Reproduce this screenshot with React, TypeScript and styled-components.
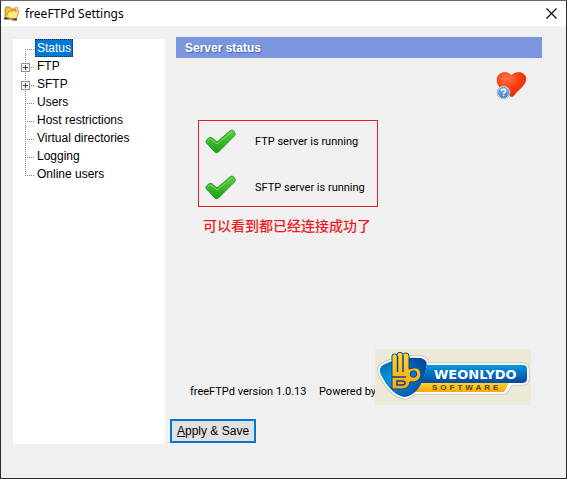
import React, { useState } from "react";
import styled, { createGlobalStyle } from "styled-components";

const Global = createGlobalStyle`
  * { box-sizing: border-box; }
  html, body { margin: 0; height: 100%; }
  #root { height: 100%; }
  body { background: #f0f0f0; color: #000; font: 12px/18px "Liberation Sans", Arial, sans-serif; }
`;

const Window = styled.div`
  min-height: 100%;
  display: flex;
  flex-direction: column;
  border: 1px solid #2b2a2e;
  border-top-color: #66656a;
  background: #f0f0f0;
`;

const TitleBar = styled.header`
  display: flex;
  align-items: center;
  height: 25px;
  padding: 0 9px 0 3px;
  gap: 5px;
  background: #fff;
`;

const Title = styled.h1`
  flex: 1;
  margin: 0;
  font: 12px/18px "Noto Sans", sans-serif;
`;

const CloseButton = styled.button`
  display: flex;
  padding: 0;
  border: 0;
  background: none;
`;

const Body = styled.div`
  flex: 1;
  display: grid;
  grid-template-columns: 152px 1fr;
  gap: 5px;
  padding: 13px 24px 34px 12px;
`;

const Sidebar = styled.nav`
  background: #fff;
  padding-left: 8px;
`;

const TreeList = styled.ul`
  margin: 0;
  padding: 0;
  list-style: none;
`;

const TreeRow = styled.li`
  display: flex;
  height: 18px;
`;

const TreeItem = styled.a<{ $selected: boolean }>`
  height: 18px;
  padding: 0 1px;
  border: 1px ${(p) => (p.$selected ? "dotted #1c2a38" : "solid transparent")};
  background: ${(p) => (p.$selected ? "#0078d7" : "transparent")};
  color: ${(p) => (p.$selected ? "#fff" : "#000")};
  line-height: 16px;
  text-decoration: none;
`;

const Main = styled.main`
  display: flex;
  flex-direction: column;
  min-width: 0;
`;

const Panel = styled.section`
  flex: 1;
  display: flex;
  flex-direction: column;
  padding-left: 6px;
`;

const Heading = styled.h2`
  margin: -2px 0 0;
  height: 21px;
  padding-left: 9px;
  background: #7b96df;
  color: #fff;
  font-size: 12px;
  line-height: 22px;
  text-shadow: 1px 1px 1px #4a62a5;
`;

const HeartButton = styled.button`
  align-self: flex-end;
  display: flex;
  margin: 13px 15px 0 0;
  padding: 0;
  border: 0;
  background: none;
`;

const StatusBox = styled.div`
  align-self: flex-start;
  width: 180px;
  margin: 19px 0 0 22px;
  padding: 6px 0 4px 6px;
  border: 1px solid #ed1c24;
  display: grid;
  gap: 17px;
`;

const StatusRow = styled.div`
  display: flex;
  align-items: center;
  gap: 19px;
  height: 29px;
  font: 11px/16px Roboto, sans-serif;
`;

const Note = styled.p`
  margin: 6px 0 0 27px;
  color: #ed1c24;
  font: 500 14px/24px "Noto Sans CJK SC", sans-serif;
`;

const Footer = styled.footer`
  display: flex;
  align-items: flex-start;
  margin-top: auto;
  padding-left: 14px;
  font: 11px/16px Roboto, sans-serif;
`;

const FooterText = styled.span<{ $width: number }>`
  width: ${(p) => p.$width}px;
  margin-top: 35px;
  white-space: nowrap;
`;

const LogoFrame = styled.div`
  display: flex;
  background: #ece9d8;
`;

const SaveButton = styled.button`
  align-self: flex-start;
  height: 24px;
  margin: 14px 0 1px;
  padding: 0 5px;
  border: 2px solid #0078d7;
  background: #e1e1e1;
  color: #000;
  font: 12px/18px "Liberation Sans", Arial, sans-serif;
`;

const FolderIcon = () => (
  <svg width="16" height="16" viewBox="0 0 16 16" aria-hidden="true">
    <path d="M1 3 L2 1 H6 L7 3 H12 V12 H1Z" fill="#f2c23a" stroke="#a87818" strokeWidth=".8" />
    <path d="M1.500 12 L5 5 H15 L12.500 12.500H1.500Z" fill="#ffe98a" stroke="#c08a18" strokeWidth=".8" />
    <path d="M9 2.500 13 1.500 14.500 4" fill="none" stroke="#e8b020" strokeWidth="1.200" />
    <path d="M0 12.500h5M8 13.500h5" stroke="#4c3c28" strokeWidth="1.800" />
    <path d="M4 13h6" stroke="#b08850" strokeWidth="1.500" />
  </svg>
);

const CloseIcon = () => (
  <svg width="11" height="11" viewBox="0 0 11 11" aria-hidden="true">
    <path d="M.5 .5 10.500 10.500M10.500 .5 .5 10.500" stroke="#000" strokeWidth="1.1" />
  </svg>
);

type BranchProps = { first: boolean; last: boolean; expandable: boolean };

const Branch = ({ first, last, expandable }: BranchProps) => (
  <svg width="14" height="18" viewBox="0 0 14 18" aria-hidden="true">
    <path
      d={`M4.500 ${first ? 10 : 0}V${last ? 11 : 18}M6 10.500H13`}
      fill="none"
      stroke="#808080"
      strokeDasharray="1 1"
      shapeRendering="crispEdges"
    />
    {expandable && (
      <g shapeRendering="crispEdges">
        <rect x=".5" y="6.500" width="8" height="8" fill="#f8f8f8" stroke="#919191" />
        <path d="M2 10.500H7M4.500 8V13" stroke="#2b3f8c" />
      </g>
    )}
  </svg>
);

const HeartIcon = () => (
  <svg width="32" height="30" viewBox="0 0 32 30" role="img" aria-label="Support and help">
    <defs>
      <radialGradient id="heart" cx=".35" cy=".25" r=".8">
        <stop offset="0" stopColor="#ff7448" />
        <stop offset=".55" stopColor="#ff3d0c" />
        <stop offset="1" stopColor="#df2500" />
      </radialGradient>
      <linearGradient id="help" x2="0" y2="1">
        <stop stopColor="#8cc0ee" />
        <stop offset="1" stopColor="#347ec9" />
      </linearGradient>
    </defs>
    <path d="M16.500 4.500C13 0 2 0 2 9.500C2 16 10 20 16 25.500Q17.500 26 19 24.500C22 19 31 15 31 7.500C30 0 20 0 16.500 4.500Z" fill="url(#heart)" stroke="#d33514" strokeWidth=".6" />
    <circle cx="8.500" cy="21.500" r="6.500" fill="#f3f3f3" stroke="#9caab7" strokeWidth=".8" />
    <circle cx="8.500" cy="21.500" r="5.200" fill="url(#help)" stroke="#3b77b5" strokeWidth=".6" />
    <path d="M6.600 20.100c0-2.600 4-2.400 4-.2 0 1.500-2 1.300-2 2.900M8.600 23.700v1.600" fill="none" stroke="#fff" strokeWidth="1.500" />
  </svg>
);

const CheckIcon = () => (
  <svg width="31" height="25" viewBox="0 0 31 25" aria-hidden="true">
    <defs>
      <linearGradient id="check" x2="0" y2="1">
        <stop stopColor="#5fd040" />
        <stop offset="1" stopColor="#17a013" />
      </linearGradient>
    </defs>
    <path d="M1.500 11 L4 8.800Q6 7.800 7.500 9.200L12 13 25.500 1.500Q27 .5 28.500 1.800L30 4Q30.700 5.500 29.500 6.800L13.500 23Q11.500 24.500 9.800 23L1.500 14Q.3 12.500 1.500 11Z" fill="url(#check)" stroke="#2b9a20" strokeWidth="1" />
    <path d="M2.500 12 5.500 9.800 12 15 27.200 2.500" fill="none" stroke="#8fe074" strokeWidth="1" opacity=".8" />
  </svg>
);

const Logo = () => (
  <svg width="156" height="56" viewBox="0 0 156 56" role="img" aria-label="WeOnlyDo Software">
    <defs>
      <linearGradient id="blue" x2="0" y2="1">
        <stop stopColor="#0498df" />
        <stop offset="1" stopColor="#07479e" />
      </linearGradient>
      <linearGradient id="gold" x2="0" y2="1">
        <stop stopColor="#ffd52d" />
        <stop offset="1" stopColor="#f9a70a" />
      </linearGradient>
      <radialGradient id="shield" cx=".3" cy=".5" r=".65">
        <stop stopColor="#00a4e4" />
        <stop offset="1" stopColor="#064da5" />
      </radialGradient>
    </defs>
    <g stroke="#b9bcc0" strokeWidth="5" strokeLinejoin="round">
      <path d="M45 16H148Q152 16 152 20V30Q152 34 147 34H136L130 43H40Z" />
      <path d="M8 16Q24 7 46 9Q54 11 51 20Q46 45 30 48Q17 47 6 26Q3 19 8 16Z" />
    </g>
    <g stroke="#fff" strokeWidth="3.500" strokeLinejoin="round">
      <path d="M45 16H148Q152 16 152 20V30Q152 34 147 34H136L130 43H40Z" fill="#fff" />
      <path d="M8 16Q24 7 46 9Q54 11 51 20Q46 45 30 48Q17 47 6 26Q3 19 8 16Z" fill="#fff" />
    </g>
    <path d="M46 34H134L129 43H40Z" fill="url(#gold)" />
    <path d="M52 16H148Q152 16 152 20V30Q152 34 147 34H46Q50 26 52 16Z" fill="url(#blue)" />
    <path d="M8 16Q24 7 46 9Q54 11 51 20Q46 45 30 48Q17 47 6 26Q3 19 8 16Z" fill="url(#shield)" />
    <path d="M17 7Q17 5 19.500 5T22 7V5Q22 3.500 25 3.500T28 5.500Q28 4 31 4T34 7V20Q45 16 46 25Q45 34 35 33Q34 40 27 40H17Z" fill="url(#gold)" stroke="#08438c" strokeWidth="1" />
    <path d="M22.500 7V23M28 6V23M17 28H31M22 32H27Q30 32 30 34T27 36H22Z" fill="none" stroke="#08438c" strokeWidth="1.500" />
    <circle cx="38.500" cy="25" r="3.300" fill="#087bc4" stroke="#08438c" />
    <text x="59" y="30" fill="#fff" fontFamily="DejaVu Sans, sans-serif" fontSize="13" fontWeight="700">WEONLYDO</text>
    <text x="57" y="41" fill="#4d4a2a" fontFamily="Liberation Sans, sans-serif" fontSize="8" fontWeight="700" letterSpacing="3">SOFTWARE</text>
  </svg>
);

const items = [
  { label: "Status", expandable: false },
  { label: "FTP", expandable: true },
  { label: "SFTP", expandable: true },
  { label: "Users", expandable: false },
  { label: "Host restrictions", expandable: false },
  { label: "Virtual directories", expandable: false },
  { label: "Logging", expandable: false },
  { label: "Online users", expandable: false },
];

export default function App() {
  const [selected, setSelected] = useState("Status");
  return (
    <>
      <Global />
      <Window>
        <TitleBar>
          <FolderIcon />
          <Title>freeFTPd Settings</Title>
          <CloseButton aria-label="Close"><CloseIcon /></CloseButton>
        </TitleBar>
        <Body>
          <Sidebar aria-label="Settings sections">
            <TreeList>
              {items.map((item, i) => (
                <TreeRow key={item.label}>
                  <Branch first={i === 0} last={i === items.length - 1} expandable={item.expandable} />
                  <TreeItem
                    href="#"
                    $selected={item.label === selected}
                    onClick={(e) => { e.preventDefault(); setSelected(item.label); }}
                  >
                    {item.label}
                  </TreeItem>
                </TreeRow>
              ))}
            </TreeList>
          </Sidebar>
          <Main>
            <Panel>
              <Heading>Server status</Heading>
              <HeartButton><HeartIcon /></HeartButton>
              <StatusBox>
                <StatusRow><CheckIcon />FTP server is running</StatusRow>
                <StatusRow><CheckIcon />SFTP server is running</StatusRow>
              </StatusBox>
              <Note>可以看到都已经连接成功了</Note>
              <Footer>
                <FooterText $width={129}>freeFTPd version 1.0.13</FooterText>
                <FooterText $width={56}>Powered by</FooterText>
                <LogoFrame><Logo /></LogoFrame>
              </Footer>
            </Panel>
            <SaveButton><u>A</u>pply &amp; Save</SaveButton>
          </Main>
        </Body>
      </Window>
    </>
  );
}
